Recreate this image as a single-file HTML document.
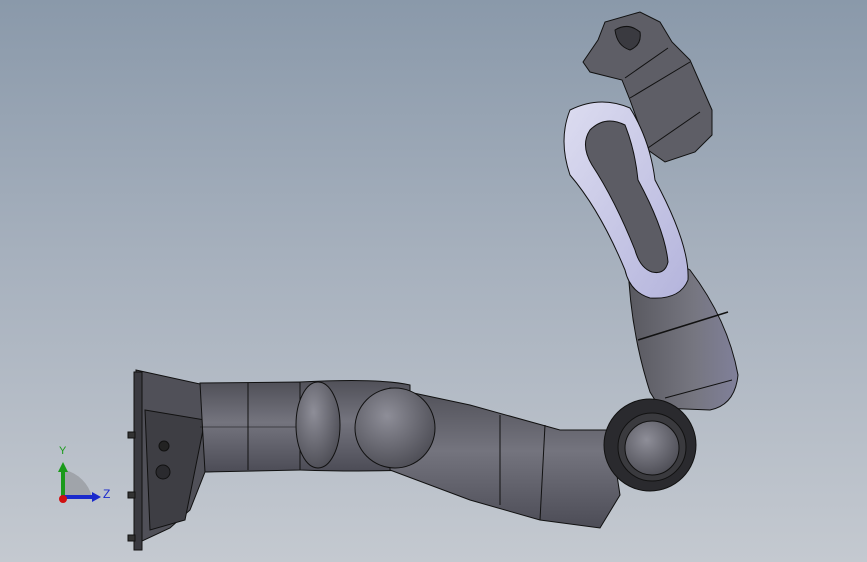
<!DOCTYPE html>
<html><head><style>
html,body{margin:0;padding:0;width:867px;height:562px;overflow:hidden}
body{background:linear-gradient(180deg,#8a99aa 0%,#a6b0bd 45%,#c4c9d0 100%)}
svg{position:absolute;left:0;top:0}
</style></head><body>
<svg width="867" height="562" viewBox="0 0 867 562">
<defs>
<linearGradient id="g" x1="0" y1="0" x2="0" y2="1">
<stop offset="0" stop-color="#505058"/><stop offset="0.45" stop-color="#74747e"/><stop offset="1" stop-color="#4c4c56"/>
</linearGradient>
<linearGradient id="gv" x1="0" y1="0" x2="1" y2="0">
<stop offset="0" stop-color="#58585f"/><stop offset="0.6" stop-color="#767680"/><stop offset="1" stop-color="#80809a"/>
</linearGradient>
<radialGradient id="sph" cx="0.4" cy="0.35" r="0.7">
<stop offset="0" stop-color="#8e8e98"/><stop offset="1" stop-color="#4c4c54"/>
</radialGradient>
<linearGradient id="lil" x1="0" y1="0" x2="1" y2="1">
<stop offset="0" stop-color="#dcdcf0"/><stop offset="1" stop-color="#b4b4dc"/>
</linearGradient>
</defs>
<g stroke="#111" stroke-width="1">
<!-- base -->
<path d="M136 370 L200 384 L240 384 L240 470 L205 472 L190 510 L170 528 L140 542 Z" fill="#505058"/>
<path d="M145 410 L205 420 L185 520 L150 530 Z" fill="#3e3e44"/>
<rect x="134" y="372" width="8" height="178" fill="#3a3a40"/>
<rect x="128" y="432" width="7" height="6" fill="#333"/><rect x="128" y="492" width="7" height="6" fill="#333"/><rect x="128" y="535" width="7" height="6" fill="#333"/>
<circle cx="164" cy="446" r="5" fill="#222"/><circle cx="163" cy="472" r="7" fill="#2a2a2e"/>
<!-- shoulder link -->
<path d="M200 383 L300 382 L300 470 L205 472 Z" fill="url(#g)"/>
<line x1="248" y1="383" x2="248" y2="470"/><line x1="200" y1="427" x2="300" y2="427" stroke-width="0.6"/>
<path d="M300 382 Q380 378 410 385 L410 470 Q360 472 300 470 Z" fill="url(#g)"/>
<ellipse cx="318" cy="425" rx="22" ry="43" fill="url(#sph)"/>
<!-- long link -->
<path d="M390 388 L470 405 L560 430 L610 430 L620 495 L600 528 L540 520 L470 500 L390 470 Z" fill="url(#g)"/>
<line x1="500" y1="415" x2="500" y2="505"/><line x1="545" y1="425" x2="540" y2="520"/>
<circle cx="395" cy="428" r="40" fill="url(#sph)"/>
<!-- forearm -->
<path d="M628 262 Q640 240 690 270 Q728 320 738 375 Q735 405 710 410 L660 408 L650 392 Q630 330 628 262 Z" fill="url(#gv)"/>
<line x1="638" y1="340" x2="728" y2="312" stroke-width="1.5"/>
<line x1="665" y1="398" x2="732" y2="380"/>
<!-- elbow -->
<circle cx="650" cy="445" r="46" fill="#2a2a2e"/>
<circle cx="652" cy="447" r="34" fill="#3a3a3e"/>
<circle cx="652" cy="448" r="27" fill="url(#sph)"/>
<!-- wrist/head -->
<path d="M583 62 L598 40 L605 22 L640 12 L660 22 L672 42 L690 60 L712 110 L712 135 L695 152 L665 162 L648 150 L630 100 L622 80 L590 72 Z" fill="#5e5e66"/>
<line x1="625" y1="78" x2="668" y2="48"/><line x1="630" y1="98" x2="690" y2="62"/><line x1="645" y1="150" x2="700" y2="112"/>
<path d="M615 30 Q628 22 640 32 Q642 45 630 50 Q617 46 615 30 Z" fill="#3a3a40"/>
<!-- lilac link -->
<path d="M570 110 Q600 95 630 108 Q650 140 655 180 Q690 245 688 280 Q680 300 650 298 Q630 292 625 270 Q600 210 570 175 Q558 140 570 110 Z" fill="url(#lil)"/>
<path d="M590 130 Q605 115 625 125 Q635 150 638 180 Q665 230 668 262 Q665 275 652 272 Q640 268 635 250 Q615 200 592 165 Q580 145 590 130 Z" fill="#5c5c64"/>
</g>
<!-- axes -->
<g>
<path d="M65 470 A37 37 0 0 1 92 497 L65 497 Z" fill="#a0a4aa"/>
<line x1="63" y1="497" x2="63" y2="470" stroke="#1a9a1a" stroke-width="4"/>
<polygon points="58,472 63,462 68,472" fill="#1a9a1a"/>
<line x1="63" y1="497" x2="94" y2="497" stroke="#1a2acc" stroke-width="4"/>
<polygon points="92,492 101,497 92,502" fill="#1a2acc"/>
<circle cx="63" cy="499" r="4" fill="#d01010"/>
<text x="59" y="454" font-family="Liberation Sans,sans-serif" font-size="11" fill="#1a9a1a">Y</text>
<text x="103" y="498" font-family="Liberation Sans,sans-serif" font-size="12" fill="#1a2acc">Z</text>
</g>
</svg>
</body></html>
